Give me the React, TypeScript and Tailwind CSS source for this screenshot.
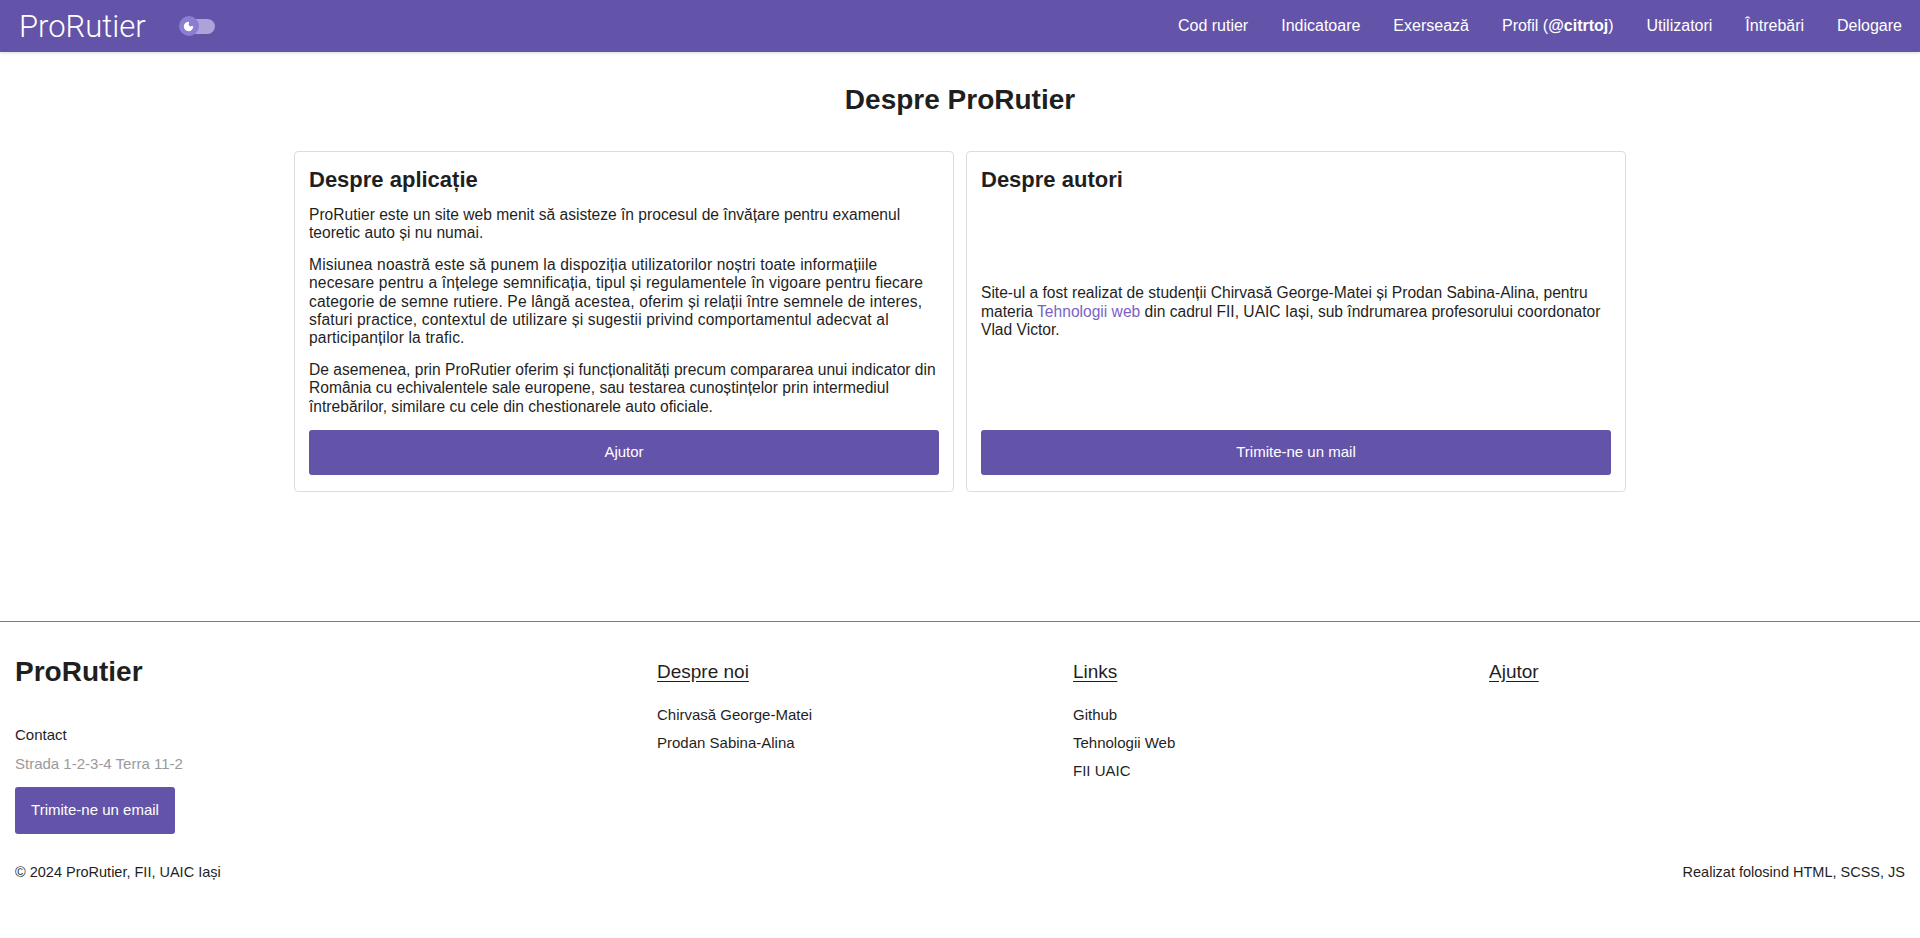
import { Moon } from "lucide-react";

const navLinks = ["Cod rutier", "Indicatoare", "Exersează", "Profil", "Utilizatori", "Întrebări", "Delogare"];

function ThemeToggle() {
  return (
    <div className="relative ml-[33px] flex h-[20px] w-[36px] items-center">
      <div className="absolute right-0 h-[15px] w-[30px] rounded-full bg-[#ada3d9]" />
      <div className="relative flex h-[20px] w-[20px] items-center justify-center rounded-full bg-[#8a7dd3]">
        <Moon size={11} strokeWidth={2.5} className="fill-white text-white" />
      </div>
    </div>
  );
}

function Navbar() {
  return (
    <nav className="flex h-[52px] items-center justify-between bg-[#6353a9] pl-[19px] pr-[18px] text-white shadow-[0_1px_3px_rgba(0,0,0,0.15)]">
      <div className="flex items-center">
        <span className="font-['Roboto'] text-[31px] font-light leading-none">ProRutier</span>
        <ThemeToggle />
      </div>
      <ul className="flex items-center gap-[33px] text-[16px]">
        {navLinks.map((l) =>
          l === "Profil" ? (
            <li key={l}>
              Profil (<b>@citrtoj</b>)
            </li>
          ) : (
            <li key={l}>{l}</li>
          )
        )}
      </ul>
    </nav>
  );
}

function Card({ title, children, button }: { title: string; children: React.ReactNode; button: string }) {
  return (
    <section className="flex flex-col rounded-[4px] border border-[#dcdcdc] px-[14px] pb-[16px] pt-[14px]">
      <h2 className="text-[22px] font-bold leading-[28px]">{title}</h2>
      {children}
      <button className="mt-[14px] h-[45px] w-full rounded-[3px] bg-[#6353a9] text-[15px] text-white">{button}</button>
    </section>
  );
}

function Main() {
  return (
    <main className="pb-[129px] pt-[31px]">
      <h1 className="text-center text-[28px] font-bold leading-[34px]">Despre ProRutier</h1>
      <div className="mx-auto mt-[34px] grid w-[1332px] grid-cols-2 gap-[12px] text-[15.6px] leading-[18.4px]">
        <Card title="Despre aplicație" button="Ajutor">
          <div className="mt-[12px] flex flex-col gap-[13px]">
            <p>
              ProRutier este un site web menit să asisteze în procesul de învățare pentru examenul teoretic auto și nu
              numai.
            </p>
            <p className="tracking-[0.15px]">
              Misiunea noastră este să punem la dispoziția utilizatorilor noștri toate informațiile necesare pentru a
              înțelege semnificația, tipul și regulamentele în vigoare pentru fiecare categorie de semne rutiere. Pe
              lângă acestea, oferim și relații între semnele de interes, sfaturi practice, contextul de utilizare și
              sugestii privind comportamentul adecvat al participanților la trafic.
            </p>
            <p>
              De asemenea, prin ProRutier oferim și funcționalități precum compararea unui indicator din România cu
              echivalentele sale europene, sau testarea cunoștințelor prin intermediul întrebărilor, similare cu cele
              din chestionarele auto oficiale.
            </p>
          </div>
        </Card>
        <Card title="Despre autori" button="Trimite-ne un mail">
          <div className="flex flex-1 items-center pt-[14px]">
            <p>
              Site-ul a fost realizat de studenții Chirvasă George-Matei și Prodan Sabina-Alina, pentru materia{" "}
              <a className="text-[#7a62c4]">Tehnologii web</a> din cadrul FII, UAIC Iași, sub îndrumarea profesorului
              coordonator Vlad Victor.
            </p>
          </div>
        </Card>
      </div>
    </main>
  );
}

function FooterCol({ title, items }: { title: string; items: string[] }) {
  return (
    <div className="pt-[6px]">
      <h3 className="text-[19px] leading-[22px] underline underline-offset-[3px]">{title}</h3>
      <ul className="mt-[23px] flex flex-col gap-[10px] text-[15px] leading-[18px]">
        {items.map((i) => (
          <li key={i}>{i}</li>
        ))}
      </ul>
    </div>
  );
}

function Footer() {
  return (
    <footer className="border-t border-[#7a7a7a] px-[15px] pb-[57px] pt-[33px]">
      <div className="grid grid-cols-[642px_416px_416px_1fr]">
        <div className="flex flex-col items-start">
          <h2 className="text-[28px] font-bold leading-[34px]">ProRutier</h2>
          <p className="mt-[37px] text-[15px] leading-[18px]">Contact</p>
          <p className="mt-[11px] text-[15px] leading-[18px] text-[#9a9a9a]">Strada 1-2-3-4 Terra 11-2</p>
          <button className="mt-[14px] h-[47px] w-[160px] rounded-[3px] bg-[#6353a9] text-[15px] text-white">
            Trimite-ne un email
          </button>
        </div>
        <FooterCol title="Despre noi" items={["Chirvasă George-Matei", "Prodan Sabina-Alina"]} />
        <FooterCol title="Links" items={["Github", "Tehnologii Web", "FII UAIC"]} />
        <FooterCol title="Ajutor" items={[]} />
      </div>
      <div className="mt-[29px] flex justify-between text-[14.5px] leading-[18px]">
        <span>© 2024 ProRutier, FII, UAIC Iași</span>
        <span>Realizat folosind HTML, SCSS, JS</span>
      </div>
    </footer>
  );
}

export default function App() {
  return (
    <div className="min-h-screen bg-white font-['Liberation_Sans',Arial,sans-serif] text-[#1f1f1f]">
      <Navbar />
      <Main />
      <Footer />
    </div>
  );
}
